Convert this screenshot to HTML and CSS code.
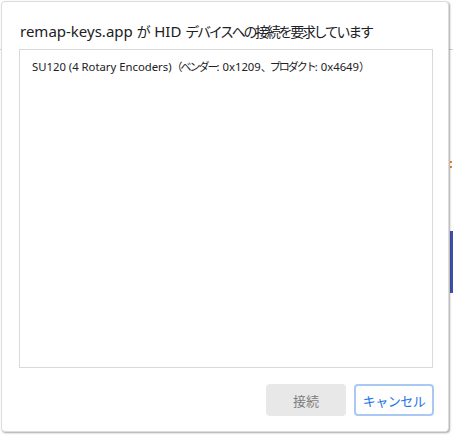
FILE: index.html
```html
<!DOCTYPE html>
<html lang="ja">
<head>
<meta charset="utf-8">
<link rel="stylesheet" href="styles.css">
</head>
<body>
<div class="page">
  <div class="page-header"></div>
  <div class="page-body">
    <div class="page-side">
      <span class="dot"></span>
      <span class="dot dot-low"></span>
      <span class="bar"></span>
    </div>
  </div>
</div>
<div class="dialog" role="dialog">
  <div class="title">remap-keys.app <span class="ja">が</span> HID <span class="ja">デバイスへの接続を要求しています</span></div>
  <div class="list">
    <div class="item">SU120 (4 Rotary Encoders)<span class="ja">（ベンダー</span>: 0x1209<span class="ja">、プロダクト</span>: 0x4649<span class="ja">）</span></div>
  </div>
  <div class="footer">
    <button class="btn btn-connect" disabled>接続</button>
    <button class="btn btn-cancel">キャンセル</button>
  </div>
</div>
</body>
</html>
```
FILE: styles.css
```css
html, body {
  margin: 0;
  padding: 0;
  background: #ffffff;
}
body {
  width: 453px;
  height: 435px;
  overflow: hidden;
  position: relative;
  font-family: "Noto Sans", "Noto Sans CJK JP", sans-serif;
}
.page {
  display: flex;
  flex-direction: column;
  height: 435px;
}
.page-header {
  height: 49px;
  border-bottom: 1px solid #d0d0d0;
  flex: none;
}
.page-body {
  flex: 1;
  display: flex;
  justify-content: flex-end;
}
.page-side {
  width: 3px;
  display: flex;
  flex-direction: column;
  padding-top: 111px;
}
.dot {
  width: 2px;
  height: 2px;
  background: #e8891e;
}
.dot-low {
  margin-top: 3px;
}
.bar {
  margin-top: 63px;
  height: 62px;
  background: #3c50a8;
}
.dialog {
  position: absolute;
  left: 1px;
  top: 1px;
  width: 448px;
  height: 431px;
  box-sizing: border-box;
  background: #ffffff;
  border: 1px solid #dcdcdc;
  border-radius: 4px;
  box-shadow: 1px 1px 2px rgba(0, 0, 0, 0.35);
  padding: 0 15px 15px 16px;
  display: flex;
  flex-direction: column;
}
.title {
  padding-top: 18px;
  height: 22px;
  line-height: 22px;
  margin-bottom: 7px;
  margin-left: 2px;
  font-size: 15px;
  color: #202124;
  white-space: nowrap;
}
.title .ja {
  font-family: "Noto Sans CJK JP", sans-serif;
  font-size: 14px;
  letter-spacing: -2.3px;
  padding-right: 2px;
}
.list {
  flex: 1;
  border: 1px solid #d9d9d9;
  margin-left: 1px;
}
.item {
  padding: 7px 12px 0;
  font-size: 11.3px;
  line-height: 18px;
  color: #202124;
  white-space: nowrap;
}
.item .ja {
  font-family: "Noto Sans CJK JP", sans-serif;
  font-size: 11px;
  letter-spacing: -2px;
}
.footer {
  margin-top: 16px;
  display: flex;
  justify-content: flex-end;
  gap: 8px;
  margin-right: -1px;
}
.btn {
  width: 80px;
  height: 32px;
  box-sizing: border-box;
  border-radius: 4px;
  font-family: "Noto Sans CJK JP", sans-serif;
  font-size: 13px;
  padding: 0;
}
.btn-connect {
  background: #e8e8e8;
  border: none;
  color: #7d7d7d;
}
.btn-cancel {
  background: #ffffff;
  border: 2px solid #a9c9f2;
  color: #1a73e8;
  letter-spacing: -0.5px;
}
```
